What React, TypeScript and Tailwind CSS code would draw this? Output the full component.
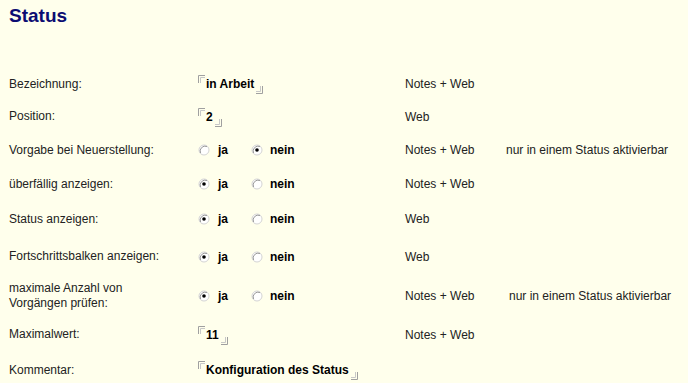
import React from 'react';

type Row = {
  label: string[];
  kind: 'field' | 'radio';
  value?: string;
  checked?: 'ja' | 'nein';
  scope: string;
  note?: string;
  noteShift?: boolean;
  h: string;
};

const rows: Row[] = [
  { label: ['Bezeichnung:'], kind: 'field', value: 'in Arbeit', scope: 'Notes + Web', h: 'h-[32px]' },
  { label: ['Position:'], kind: 'field', value: '2', scope: 'Web', h: 'h-[33px]' },
  { label: ['Vorgabe bei Neuerstellung:'], kind: 'radio', checked: 'nein', scope: 'Notes + Web', note: 'nur in einem Status aktivierbar', h: 'h-[34px]' },
  { label: ['überfällig anzeigen:'], kind: 'radio', checked: 'ja', scope: 'Notes + Web', h: 'h-[34px]' },
  { label: ['Status anzeigen:'], kind: 'radio', checked: 'ja', scope: 'Web', h: 'h-[36px]' },
  { label: ['Fortschrittsbalken anzeigen:'], kind: 'radio', checked: 'ja', scope: 'Web', h: 'h-[39px]' },
  { label: ['maximale Anzahl von', 'Vorgängen prüfen:'], kind: 'radio', checked: 'ja', scope: 'Notes + Web', note: 'nur in einem Status aktivierbar', noteShift: true, h: 'h-[40px]' },
  { label: ['Maximalwert:'], kind: 'field', value: '11', scope: 'Notes + Web', h: 'h-[37px]' },
  { label: ['Kommentar:'], kind: 'field', value: 'Konfiguration des Status', scope: '', h: 'h-[34px]' },
];

function OpenMark() {
  return (
    <svg width="7" height="8" viewBox="0 0 7 8" className="self-start mt-[-2px]">
      <path d="M0.5 8V0.5H7" fill="none" stroke="#a0a0a0" />
      <path d="M2.5 8V2.5H7" fill="none" stroke="#c8c8c8" />
    </svg>
  );
}

function CloseMark() {
  return (
    <svg width="7" height="8" viewBox="0 0 7 8" className="self-end mb-[-3px]">
      <path d="M6.5 0V7.5H0" fill="none" stroke="#a0a0a0" />
      <path d="M4.5 0V5.5H0" fill="none" stroke="#c8c8c8" />
    </svg>
  );
}

function Radio({ on }: { on: boolean }) {
  return (
    <svg width="12" height="12" viewBox="0 0 12 12">
      <circle cx="6" cy="6" r="5" fill="#ffffff" stroke="#d4d4d4" />
      <path d="M2.5 9A5 5 0 0 1 9 2.5" fill="none" stroke="#9a9a9a" />
      {on && <circle cx="6" cy="6" r="1.8" fill="#000000" />}
    </svg>
  );
}

export default function App() {
  return (
    <div className="w-[688px] h-[383px] overflow-hidden bg-[#ffffec] font-['Liberation_Sans',Arial,sans-serif] text-[12px]">
      <h1 className="pl-[9px] pt-[4px] h-[68px] text-[19px] font-bold text-[#0c0c72] leading-[24px]">Status</h1>
      <div className="flex flex-col">
        {rows.map((r, i) => (
          <div key={i} className={`flex items-center ${r.h}`}>
            <div className="w-[198px] shrink-0 pl-[9px] text-[#222222] leading-[15px]">
              {r.label.map((l, j) => (
                <div key={j}>{l}</div>
              ))}
            </div>
            <div className="w-[207px] shrink-0 flex items-center">
              {r.kind === 'field' ? (
                <div className="flex items-center h-[14px] font-bold text-black">
                  <OpenMark />
                  <span className="ml-[1px] mr-[2px]">{r.value}</span>
                  <CloseMark />
                </div>
              ) : (
                <div className="flex items-center font-bold text-black">
                  <Radio on={r.checked === 'ja'} />
                  <span className="ml-[8px] w-[33px]">ja</span>
                  <Radio on={r.checked === 'nein'} />
                  <span className="ml-[7px]">nein</span>
                </div>
              )}
            </div>
            <div className="w-[102px] text-[#222222] shrink-0">{r.scope}</div>
            {r.note && (
              <div className={`text-[#222222] whitespace-nowrap ${r.noteShift ? 'ml-[2px]' : 'ml-[-1px]'}`}>{r.note}</div>
            )}
          </div>
        ))}
      </div>
    </div>
  );
}
